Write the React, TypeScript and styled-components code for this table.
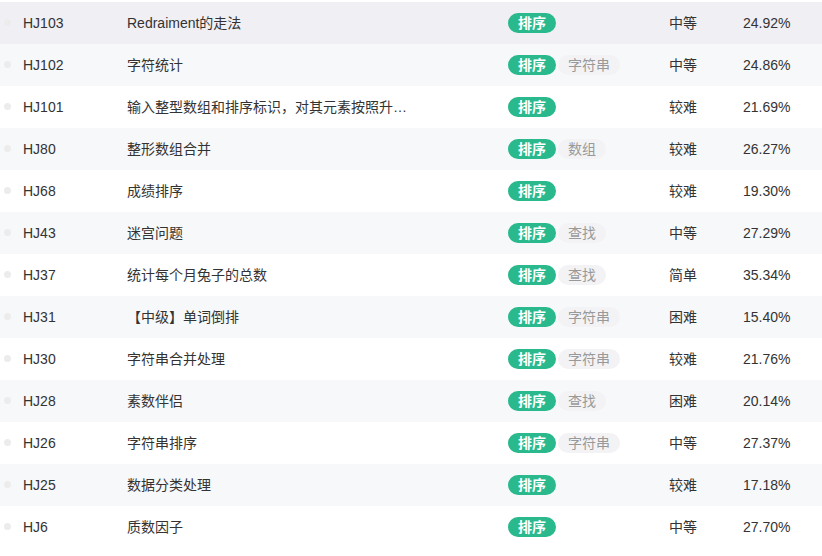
import React from "react";
import styled, { createGlobalStyle } from "styled-components";

const Global = createGlobalStyle`
  html, body { margin: 0; padding: 0; background: #fff; }
  body { font-family: "Liberation Sans", Arial, "Noto Sans CJK SC", sans-serif; font-size: 14px; color: #333; }
`;

type Row = { id: string; title: string; tags: string[]; level: string; rate: string };

const rows: Row[] = [
  { id: "HJ103", title: "Redraiment的走法", tags: [], level: "中等", rate: "24.92%" },
  { id: "HJ102", title: "字符统计", tags: ["字符串"], level: "中等", rate: "24.86%" },
  { id: "HJ101", title: "输入整型数组和排序标识，对其元素按照升序或降序进行排序", tags: [], level: "较难", rate: "21.69%" },
  { id: "HJ80", title: "整形数组合并", tags: ["数组"], level: "较难", rate: "26.27%" },
  { id: "HJ68", title: "成绩排序", tags: [], level: "较难", rate: "19.30%" },
  { id: "HJ43", title: "迷宫问题", tags: ["查找"], level: "中等", rate: "27.29%" },
  { id: "HJ37", title: "统计每个月兔子的总数", tags: ["查找"], level: "简单", rate: "35.34%" },
  { id: "HJ31", title: "【中级】单词倒排", tags: ["字符串"], level: "困难", rate: "15.40%" },
  { id: "HJ30", title: "字符串合并处理", tags: ["字符串"], level: "较难", rate: "21.76%" },
  { id: "HJ28", title: "素数伴侣", tags: ["查找"], level: "困难", rate: "20.14%" },
  { id: "HJ26", title: "字符串排序", tags: ["字符串"], level: "中等", rate: "27.37%" },
  { id: "HJ25", title: "数据分类处理", tags: [], level: "较难", rate: "17.18%" },
  { id: "HJ6", title: "质数因子", tags: [], level: "中等", rate: "27.70%" },
];

const List = styled.div`
  padding-top: 2px;
`;

const RowBox = styled.div<{ $bg: string }>`
  display: grid;
  grid-template-columns: 23px 104px 381px 161px 74px 1fr;
  align-items: center;
  height: 42px;
  background: ${(p) => p.$bg};
`;

const Dot = styled.span`
  display: block;
  width: 7px;
  height: 7px;
  border-radius: 50%;
  background: #ececec;
  margin-left: 4px;
  margin-top: -2px;
`;

const Cell = styled.div`
  white-space: nowrap;
  line-height: 20px;
`;

const Title = styled(Cell)`
  max-width: 282px;
  overflow: hidden;
  text-overflow: ellipsis;
`;

const Tags = styled.div`
  display: flex;
  gap: 2px;
`;

const Tag = styled.span<{ $primary?: boolean }>`
  display: inline-block;
  height: 20px;
  line-height: 20px;
  padding: 0 10px;
  border-radius: 10px;
  font-size: 14px;
  background: ${(p) => (p.$primary ? "#2ab98d" : "#f3f3f5")};
  color: ${(p) => (p.$primary ? "#fff" : "#999")};
  font-weight: ${(p) => (p.$primary ? 600 : 400)};
`;

export default function App() {
  return (
    <>
      <Global />
      <List>
        {rows.map((r, i) => (
          <RowBox key={r.id} $bg={i === 0 ? "#efeff4" : i % 2 === 1 ? "#f7f8fa" : "#ffffff"}>
            <Dot />
            <Cell>{r.id}</Cell>
            <Title>{r.title}</Title>
            <Tags>
              <Tag $primary>排序</Tag>
              {r.tags.map((t) => (
                <Tag key={t}>{t}</Tag>
              ))}
            </Tags>
            <Cell>{r.level}</Cell>
            <Cell>{r.rate}</Cell>
          </RowBox>
        ))}
      </List>
    </>
  );
}
